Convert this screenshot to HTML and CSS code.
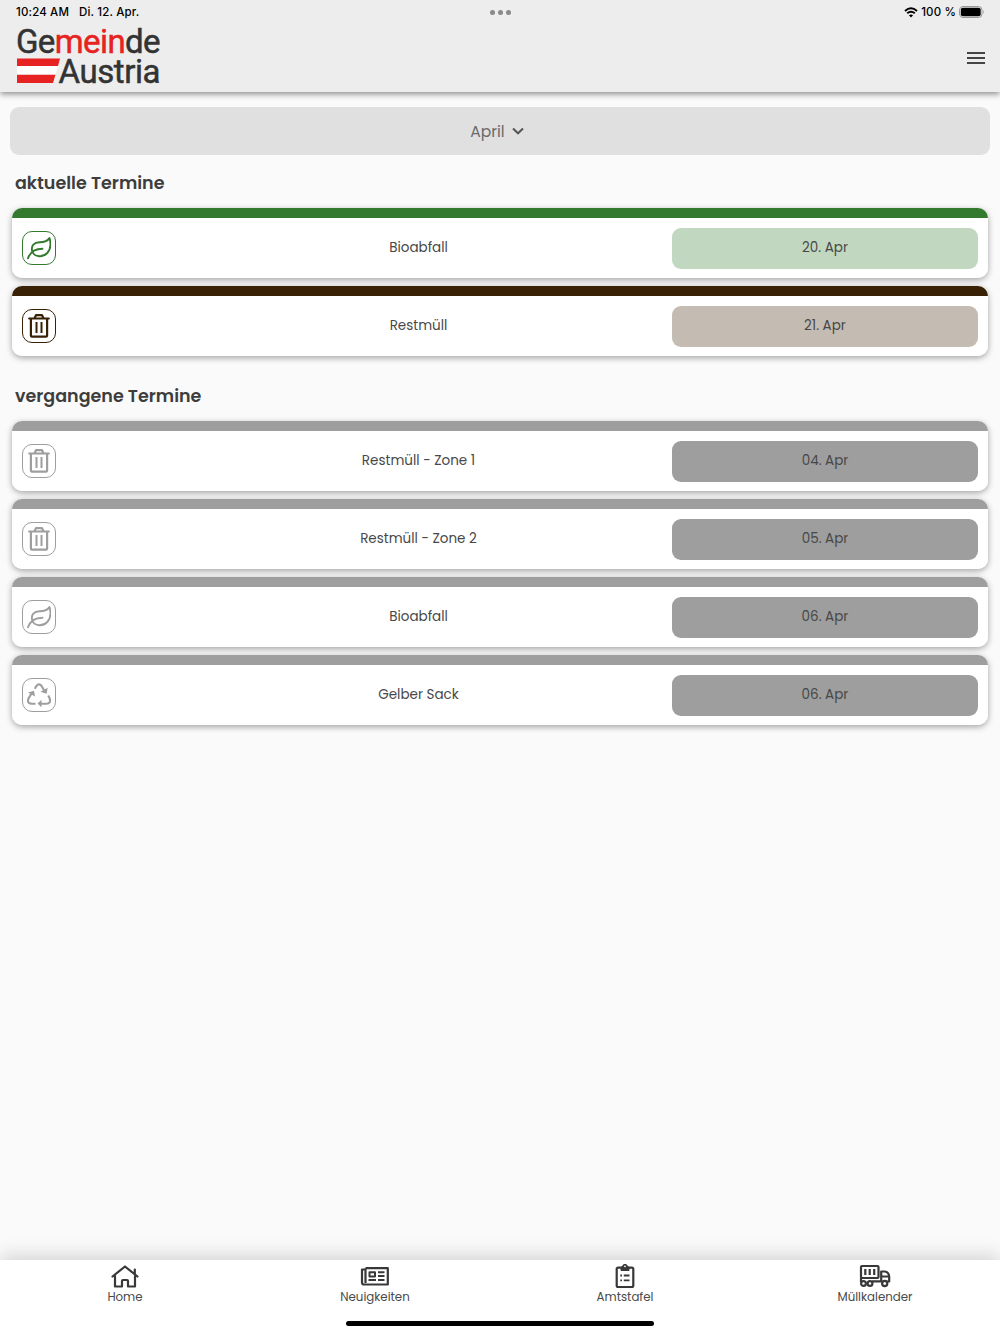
FILE: index.html
```html
<!DOCTYPE html>
<html lang="de">
<head>
    <meta charset="UTF-8">
    <meta name="viewport" content="width=device-width, initial-scale=1.0">
    <title>Müllkalender - Gemeinde Austria</title>
    <link rel="stylesheet" href="styles.css">
</head>
<body>
    <!-- Icons -->
    <svg class="icon-defs" width="0" height="0">
        <symbol id="icon-leaf" viewBox="0 0 24 24">
            <path d="M1 22.300C3 16.500 8 12.700 15.500 12.700M5.300 15.500C3.500 9.500 7.500 6.500 12.500 6.300C17 6.200 20.500 5.500 22.500 2C24.300 8 23.800 13 20.300 17C16 21.500 7.500 21.500 5.300 15.500Z" fill="none" stroke="currentColor" stroke-width="1.900" stroke-linecap="round" stroke-linejoin="round"/>
        </symbol>
        <symbol id="icon-trash" viewBox="0 0 24 24">
            <path d="M2.200 4.500H21.800M3.900 4.500V21.500Q3.900 22.700 5 22.700H19Q20.100 22.700 20.100 21.500V4.500M7.500 4.300L9 1.200H15L16.500 4.300" fill="none" stroke="currentColor" stroke-width="2.200" stroke-linecap="round" stroke-linejoin="round"/>
            <path d="M9.500 8V19M14.500 8V19" fill="none" stroke="currentColor" stroke-width="2"/>
        </symbol>
        <symbol id="icon-recycle" viewBox="0 0 24 24">
            <path d="M7.800 5.700L9.300 3.200Q12 -.500 14.700 3.200L17.200 7.500M21.300 12.500L22.600 15.200Q24.300 20.500 19.500 20.700H14M8.500 20.700H4.500Q-.300 20.500 1.500 15.500L4.500 10.500" fill="none" stroke="currentColor" stroke-width="2.100"/>
            <path d="M20.700 4.700L19.500 10.700L13.500 8.700ZM14.500 16.800V24.300L10.500 20.600ZM1 9.500L7 7.800L8 13.500Z" fill="currentColor"/>
        </symbol>
    </svg>

    <header class="header">
        <div class="status-bar">
            <div class="status-left"><span class="time">10:24 AM</span><span class="date">Di. 12. Apr.</span></div>
            <div class="dots"><i></i><i></i><i></i></div>
            <div class="status-right">
                <svg class="wifi" viewBox="0 0 14 11">
                    <path d="M1 4Q7 -1.500 13 4M3.200 6.300Q7 3 10.800 6.300" fill="none" stroke="#000" stroke-width="1.900"/>
                    <path d="M4.900 8.200Q7 6.700 9.100 8.200L7 10.400Z"/>
                </svg>
                <span class="percent">100 %</span>
                <svg class="battery" viewBox="0 0 26 12">
                    <rect x=".500" y=".500" width="22.500" height="11" rx="3.500" fill="none" stroke="#999"/>
                    <rect x="1.800" y="1.800" width="19.900" height="8.400" rx="2"/>
                    <path d="M24.300 4Q26 6 24.300 8Z" fill="#999"/>
                </svg>
            </div>
        </div>
        <div class="title-bar">
            <svg class="logo" viewBox="0 0 144 58">
                <path d="M0 31.500H43L41 39H0ZM0 47.500H38.500L36 56H0Z" fill="#e62320"/>
                <path d="M0 39H41L38.500 47.500H0Z" fill="#fff"/>
                <text x="-1" y="26" textLength="144.500" lengthAdjust="spacing">Ge<tspan class="red">mein</tspan>de</text>
                <text x="41.500" y="56" textLength="102" lengthAdjust="spacing">Austria</text>
            </svg>
            <div class="menu-button"><span></span><span></span><span></span></div>
        </div>
    </header>

    <main class="content">
        <div class="month-select">
            <span>April</span>
            <svg viewBox="0 0 12 8"><path d="M1 1.500L6 6.300L11 1.500" fill="none" stroke="currentColor" stroke-width="2"/></svg>
        </div>

        <h2>aktuelle Termine</h2>
        <div class="list">
            <div class="card bio">
                <div class="icon-box"><svg><use href="#icon-leaf"/></svg></div>
                <div class="name">Bioabfall</div>
                <div class="day">20. Apr</div>
            </div>
            <div class="card rest">
                <div class="icon-box"><svg><use href="#icon-trash"/></svg></div>
                <div class="name">Restmüll</div>
                <div class="day">21. Apr</div>
            </div>
        </div>

        <h2 class="past-title">vergangene Termine</h2>
        <div class="list">
            <div class="card">
                <div class="icon-box"><svg><use href="#icon-trash"/></svg></div>
                <div class="name">Restmüll - Zone 1</div>
                <div class="day">04. Apr</div>
            </div>
            <div class="card">
                <div class="icon-box"><svg><use href="#icon-trash"/></svg></div>
                <div class="name">Restmüll - Zone 2</div>
                <div class="day">05. Apr</div>
            </div>
            <div class="card">
                <div class="icon-box"><svg><use href="#icon-leaf"/></svg></div>
                <div class="name">Bioabfall</div>
                <div class="day">06. Apr</div>
            </div>
            <div class="card">
                <div class="icon-box"><svg><use href="#icon-recycle"/></svg></div>
                <div class="name">Gelber Sack</div>
                <div class="day">06. Apr</div>
            </div>
        </div>
    </main>

    <footer class="footer">
        <nav class="tabs">
            <div class="tab">
                <svg viewBox="0 0 32 26" fill="none" stroke="currentColor" stroke-width="2.200" stroke-linejoin="round" stroke-linecap="round">
                    <path d="M3.500 13.500L16 3.500L28.500 13.500M6 12.500V23.500H13V18Q13 17 14 17H18Q19 17 19 18V23.500H26V12.500M25.800 6.500V11"/>
                </svg>
                <span>Home</span>
            </div>
            <div class="tab">
                <svg viewBox="0 0 32 26" fill="none" stroke="currentColor" stroke-width="2.200" stroke-linejoin="round">
                    <path d="M6.500 5.200H28.800V21.500H5Q3 21.500 3 19.500V6.500H6.500M6.500 5.200V20"/>
                    <path d="M10.500 9.200H16V13.500H10.500ZM9.500 17H17M19 9.200H25.500M19 13H25.500M19 17H25.500" stroke-width="2"/>
                </svg>
                <span>Neuigkeiten</span>
            </div>
            <div class="tab">
                <svg viewBox="0 0 32 26" fill="none" stroke="currentColor" stroke-width="2.200" stroke-linejoin="round">
                    <rect x="7.700" y="4.700" width="16.600" height="19.300" rx="1.500"/>
                    <path d="M12 4H13.500Q13.700 1.300 16 1.300T18.500 4H20V7.500H12Z" fill="currentColor" stroke-width="1"/>
                    <circle cx="16" cy="3.300" r=".900" fill="#fff" stroke="none"/>
                    <path d="M11.300 12.500H13M14.800 12.500H20.500M11.300 17.300H13M14.800 17.300H20.500" stroke-width="1.800"/>
                </svg>
                <span>Amtstafel</span>
            </div>
            <div class="tab">
                <svg viewBox="0 0 32 26" fill="none" stroke="currentColor" stroke-width="2.200" stroke-linejoin="round">
                    <rect x="2" y="3" width="17.500" height="12" rx="1"/>
                    <path d="M6.300 6V12M10.700 6V12M15.200 6V12"/>
                    <path d="M2 15V19M13 18.300H23.500M22.200 18V8.500H26Q30.200 9.500 30.200 14V18.500H28M23 13.500H30"/>
                    <circle cx="4.500" cy="20.500" r="2.400"/>
                    <circle cx="11" cy="20.500" r="2.400"/>
                    <circle cx="25.700" cy="20.500" r="2.600"/>
                </svg>
                <span>Müllkalender</span>
            </div>
        </nav>
        <div class="home-indicator"></div>
    </footer>
</body>
</html>
```
FILE: styles.css
```css
* {
    box-sizing: border-box;
}

body {
    margin: 0;
    height: 1334px;
    display: flex;
    flex-direction: column;
    overflow: hidden;
    background-color: #fafafa;
    color: #3d3d3d;
    font-family: Poppins, Inter, sans-serif;
}

.icon-defs {
    position: absolute;
}

.header {
    height: 92px;
    background-color: #ededed;
    box-shadow: 0 2px 6px rgba(0, 0, 0, 0.45);
}

.status-bar {
    height: 24px;
    padding: 0 15px 0 16px;
    display: grid;
    grid-template-columns: 1fr auto 1fr;
    align-items: center;
    color: #000;
    font-family: Inter, sans-serif;
    font-size: 11.500px;
    font-weight: 500;
    letter-spacing: 0.15px;
}

.status-left {
    display: flex;
    gap: 10px;
}

.dots {
    display: flex;
    gap: 3px;
}

.dots i {
    width: 5px;
    height: 5px;
    border-radius: 50%;
    background-color: #8a8a8a;
}

.status-right {
    display: flex;
    justify-content: flex-end;
    align-items: center;
    gap: 3px;
}

.wifi {
    width: 14px;
    height: 11px;
}

.battery {
    width: 26px;
    height: 12px;
}

.title-bar {
    display: flex;
    justify-content: space-between;
    padding: 3px 15px 0 17px;
}

.logo {
    width: 144px;
    height: 58px;
    overflow: visible;
    font-family: Roboto, sans-serif;
    font-size: 33px;
    font-weight: 400;
    fill: #333;
}

.logo text {
    stroke: #333;
    stroke-width: 0.5px;
}

.logo .red {
    fill: #e62320;
    stroke: #e62320;
}

.menu-button {
    width: 18px;
    margin-top: 25px;
    display: flex;
    flex-direction: column;
    gap: 3px;
}

.menu-button span {
    height: 2px;
    background-color: #444;
}

.content {
    flex: 1;
    padding: 15px 10px 0;
}

.month-select {
    height: 48px;
    display: flex;
    justify-content: center;
    align-items: center;
    gap: 7px;
    padding-right: 6px;
    border-radius: 9px;
    background-color: #e0e0e0;
    color: #6a6a6a;
    font-size: 15.500px;
}

.month-select svg {
    width: 12px;
    height: 8px;
    color: #555;
}

h2 {
    margin: 15px 5px 12px;
    font-size: 17.500px;
    font-weight: 600;
    line-height: 26px;
}

.past-title {
    margin-top: 27px;
}

.list {
    padding: 0 2px;
    display: flex;
    flex-direction: column;
    gap: 8px;
}

.card {
    --color: #9e9e9e;
    --day-color: #9e9e9e;
    height: 70px;
    display: grid;
    grid-template-columns: 150px 1fr 306px;
    align-items: center;
    padding: 0 10px;
    border-radius: 10px;
    background: linear-gradient(var(--color) 10px, #fff 10px);
    padding-top: 10px;
    box-shadow: 0 2px 6px rgba(0, 0, 0, 0.35);
    color: #484848;
    font-size: 13.500px;
    text-align: center;
}

.bio {
    --color: #337a2f;
    --day-color: #c1d7c0;
}

.rest {
    --color: #382105;
    --day-color: #c4bcb2;
}

.icon-box {
    width: 34px;
    height: 34px;
    display: flex;
    align-items: center;
    justify-content: center;
    border: 1px solid var(--color);
    border-radius: 10px;
    color: var(--color);
}

.icon-box svg {
    width: 24px;
    height: 24px;
}

.name {
    padding-right: 7px;
}

.day {
    height: 41px;
    line-height: 40px;
    border-radius: 9px;
    background-color: var(--day-color);
}

.footer {
    height: 74px;
    background-color: #fff;
    box-shadow: 0 -4px 18px rgba(0, 0, 0, 0.16);
}

.tabs {
    display: grid;
    grid-template-columns: repeat(4, 1fr);
    height: 60px;
}

.tab {
    display: flex;
    flex-direction: column;
    align-items: center;
    padding-top: 3px;
    color: #383838;
    font-size: 11.800px;
    line-height: 16px;
}

.tab span {
    color: #4a4a4a;
}

.tab svg {
    width: 32px;
    height: 26px;
}

.home-indicator {
    width: 308px;
    height: 5px;
    margin: 1px auto 0;
    border-radius: 3px;
    background-color: #000;
}
```
